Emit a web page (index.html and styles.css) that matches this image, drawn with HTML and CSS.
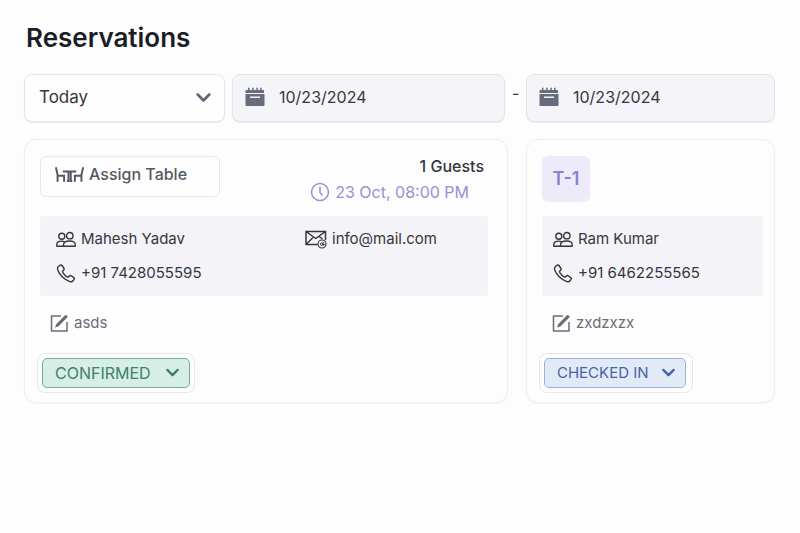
FILE: index.html
```html
<!DOCTYPE html>
<html lang="en">

<head>
    <meta charset="utf-8">
    <meta name="viewport" content="width=device-width, initial-scale=1">
    <title>Reservations</title>
    <link rel="stylesheet" href="styles.css">
</head>

<body>
    <!-- shared icons -->
    <svg class="sprite" aria-hidden="true">
        <symbol id="chevron" viewBox="0 0 16 16">
            <path d="M2.500 5.200 8 10.800l5.500-5.600" fill="none" stroke="currentColor" stroke-width="2.500" stroke-linecap="round" stroke-linejoin="round" />
        </symbol>
        <symbol id="calendar" viewBox="0 0 20 20">
            <path d="M1.500 3H3V.8h1.500V3h2.700V.8h1.500V3h2.700V.8h1.500V3h2.200V.8h1.500V3h1.900q.5 0 .5.500V6H.5V3.500q0-.5 1-.5z" fill="currentColor" />
            <path fill-rule="evenodd" d="M.5 7h19v11q0 1-1 1h-17q-1 0-1-1zM5 9.500v1.500h10V9.500z" fill="currentColor" />
        </symbol>
        <symbol id="people" viewBox="0 0 20 16">
            <g fill="none" stroke="currentColor" stroke-width="1.400" stroke-linejoin="round">
                <circle cx="5.800" cy="4.800" r="3" />
                <circle cx="13.800" cy="4.200" r="3.200" />
                <path d="M7.500 14.800H.8v-1.600q0-3.600 4.500-3.600 2 0 3.200.7M7.500 14.800v-1.300q0-4 6-4t5.700 4v1.300z" />
            </g>
        </symbol>
        <symbol id="phone" viewBox="0 0 20 20">
            <path d="M2.300 2.400 4 1.200q1-.6 1.800.4l2 2.900q.6 1-.2 1.800l-1 1q-.5.700.1 1.700 1.800 2.800 4.400 4.500.9.500 1.600 0l1.100-1q.8-.7 1.700-.1l2.700 1.900q1 .8.4 1.700l-1.200 1.700q-1.200 1.400-3.300.8Q4.600 14.700 1.300 6.200.600 3.800 2.300 2.400z" fill="none" stroke="currentColor" stroke-width="1.500" stroke-linejoin="round" />
        </symbol>
        <symbol id="mail" viewBox="0 0 22 20">
            <g fill="none" stroke="currentColor" stroke-width="1.500" stroke-linejoin="round" stroke-linecap="round">
                <path d="M12 15.500H1v-13h19.500v8M1 2.500l9.700 7 9.800-7M1 15.500l6.500-6.500M14 7.500l3 2" />
                <circle cx="17" cy="15" r="4" stroke-width="1.200" />
                <circle cx="16.700" cy="15.200" r="1.300" stroke-width="1" />
                <path d="M18.200 13.500V16q.8.700 1.500-.5" stroke-width="1" />
            </g>
        </symbol>
        <symbol id="clock" viewBox="0 0 20 20">
            <path d="M10 5v5.500l2 2.500" fill="none" stroke="currentColor" stroke-width="1.500" stroke-linecap="round" />
            <circle cx="10" cy="10" r="8.500" fill="none" stroke="currentColor" stroke-width="1.500" />
        </symbol>
        <symbol id="edit" viewBox="0 0 18 18">
            <path d="M10.500 2H1v15h15.500V8" fill="none" stroke="currentColor" stroke-width="1.500" stroke-linejoin="round" />
            <path d="m4.600 13.600 1-3.300L14.500 1.200q.7-.6 1.400 0l.9.9q.7.700 0 1.400l-9 9.100z" fill="currentColor" />
        </symbol>
        <symbol id="table" viewBox="0 0 28 16">
            <path d="M.8 1 2.500 8.300V15M2.500 9.300h6.300V15M27.200 1l-1.700 7.300V15M25.500 9.300h-6.300V15M7.500 5h13M13 5v9.300h-1.500M15.200 5v9.300h1.500" fill="none" stroke="currentColor" stroke-width="1.900" />
        </symbol>
    </svg>

    <main class="page">
        <h1>Reservations</h1>

        <form class="filters">
            <div class="field">
                <select class="control" aria-label="Period">
                    <option>Today</option>
                    <option>Tomorrow</option>
                </select>
                <svg class="field-chevron"><use href="#chevron" /></svg>
            </div>
            <label class="control date">
                <svg class="icon-calendar"><use href="#calendar" /></svg>
                <input type="text" value="10/23/2024" aria-label="From">
            </label>
            <span class="dash">-</span>
            <label class="control date">
                <svg class="icon-calendar"><use href="#calendar" /></svg>
                <input type="text" value="10/23/2024" aria-label="To">
            </label>
        </form>

        <div class="cards">
            <article class="card card-wide">
                <div class="card-head">
                    <button type="button" class="assign">
                        <svg class="icon-table"><use href="#table" /></svg>
                        Assign Table
                    </button>
                    <div class="booking">
                        <div class="guests">1 Guests</div>
                        <div class="time"><svg><use href="#clock" /></svg>23 Oct, 08:00 PM</div>
                    </div>
                </div>
                <div class="contact">
                    <div class="line"><svg><use href="#people" /></svg>Mahesh Yadav</div>
                    <div class="line"><svg class="icon-mail"><use href="#mail" /></svg>info@mail.com</div>
                    <div class="line"><svg><use href="#phone" /></svg>+91 7428055595</div>
                </div>
                <div class="note"><svg><use href="#edit" /></svg>asds</div>
                <div class="status confirmed">
                    <select aria-label="Status of Mahesh Yadav">
                        <option>CONFIRMED</option>
                    </select>
                    <svg><use href="#chevron" /></svg>
                </div>
            </article>

            <article class="card">
                <div class="card-head">
                    <div class="table-tag">T-1</div>
                </div>
                <div class="contact">
                    <div class="line"><svg><use href="#people" /></svg>Ram Kumar</div>
                    <div class="line"><svg><use href="#phone" /></svg>+91 6462255565</div>
                </div>
                <div class="note"><svg><use href="#edit" /></svg>zxdzxzx</div>
                <div class="status checked-in">
                    <select aria-label="Status of Ram Kumar">
                        <option>CHECKED IN</option>
                    </select>
                    <svg><use href="#chevron" /></svg>
                </div>
            </article>
        </div>
    </main>
</body>

</html>
```
FILE: styles.css
```css
* {
    box-sizing: border-box;
}

body {
    margin: 0;
    background: #fdfdfe;
    color: #35373f;
    font-family: Inter, "Liberation Sans", sans-serif;
    font-size: 15px;
    line-height: 20px;
}

svg {
    flex: none;
}

select,
input,
button {
    font: inherit;
    color: inherit;
}

select {
    appearance: none;
    width: 100%;
}

.sprite {
    display: none;
}

.page {
    padding: 22px 25px 24px 24px;
}

h1 {
    margin: 0 0 20px 2px;
    color: #1b1d26;
    font-size: 26px;
    font-weight: 600;
    line-height: 32px;
}

/* filters */
.filters {
    display: grid;
    grid-template-columns: 201fr 273fr 7px 249fr;
    gap: 7px;
    margin-bottom: 17px;
}

.field {
    position: relative;
}

.control {
    min-width: 0;
    height: 48px;
    padding: 0 14px 2px;
    border: 1px solid #e3e3ea;
    border-radius: 8px;
    background: #fefefe;
    box-shadow: 0 1px 1px #ececf1;
    font-size: 16px;
}

select.control {
    font-size: 17px;
}

.field-chevron {
    position: absolute;
    top: 15px;
    right: 13px;
    width: 17px;
    height: 17px;
    color: #626672;
    pointer-events: none;
}

.date {
    display: flex;
    align-items: center;
    gap: 14px;
    padding: 0 12px 2px;
    background: #f4f4f9;
}

.date input {
    flex: 1;
    min-width: 0;
    padding: 0;
    border: 0;
    background: none;
}

.icon-calendar {
    width: 20px;
    height: 20px;
    color: #676c7b;
}

.dash {
    padding-top: 9px;
    font-size: 16px;
}

/* reservation cards */
.cards {
    display: grid;
    grid-template-columns: 484fr 249fr;
    gap: 18px;
}

.card {
    padding: 16px 11px 9px 12px;
    border: 1px solid #eeeef3;
    border-radius: 12px;
    box-shadow: 0 1px 1px #f3f3f6;
}

.card-wide {
    padding-right: 19px;
}

.card-head {
    display: flex;
    justify-content: space-between;
    align-items: flex-start;
    height: 60px;
    margin-left: 3px;
}

.assign {
    display: flex;
    gap: 5px;
    width: 180px;
    height: 41px;
    padding: 7px 14px;
    border: 1px solid #e6e6ec;
    border-radius: 6px;
    background: #fefefe;
    color: #555862;
    font-size: 16px;
    font-weight: 500;
}

.icon-table {
    width: 29px;
    height: 17px;
    margin-top: 2px;
}

.booking {
    display: flex;
    flex-direction: column;
    align-items: flex-end;
    gap: 6px;
    font-size: 16px;
}

.guests {
    padding-right: 4px;
    font-weight: 500;
}

.time {
    display: flex;
    gap: 5px;
    padding-right: 19px;
    color: #9c8fd3;
}

.time svg {
    width: 20px;
    height: 20px;
}

.table-tag {
    width: 48px;
    height: 46px;
    border-radius: 6px;
    background: #edeafa;
    color: #8683cf;
    font-size: 18px;
    font-weight: 600;
    line-height: 46px;
    text-align: center;
}

.contact {
    display: grid;
    gap: 14px 0;
    margin-left: 3px;
    padding: 13px 11px;
    border-radius: 4px;
    background: #f3f3f8;
}

.card-wide .contact {
    grid-template-columns: 249fr 167fr;
    padding: 13px 16px;
}

.line {
    display: flex;
    align-items: center;
    gap: 5px;
    white-space: nowrap;
}

.line svg {
    width: 20px;
    height: 19px;
}

.line .icon-mail {
    width: 22px;
    height: 20px;
}

.note {
    display: flex;
    align-items: center;
    gap: 5px;
    margin: 17px 0 20px 13px;
    color: #6b6d77;
}

.note svg {
    width: 19px;
    height: 18px;
}

.status {
    position: relative;
    width: 158px;
    padding: 4px;
    border: 1px solid #e6e6ec;
    border-radius: 8px;
    background: #fefefe;
    font-size: 16px;
}

.status select {
    display: block;
    height: 30px;
    padding: 0 12px 1px;
    border: 1px solid;
    border-radius: 5px;
}

.status svg {
    position: absolute;
    top: 11px;
    right: 14px;
    width: 15px;
    height: 15px;
    pointer-events: none;
}

.confirmed {
    color: #41806c;
}

.confirmed select {
    border-color: #72ac9a;
    background: #d6eee6;
}

.checked-in {
    width: 154px;
    padding-right: 6px;
    color: #4a62a5;
    font-size: 15px;
}

.checked-in select {
    border-color: #9fb3d8;
    background: #e1ebf8;
}

.checked-in svg {
    right: 16px;
}
```
